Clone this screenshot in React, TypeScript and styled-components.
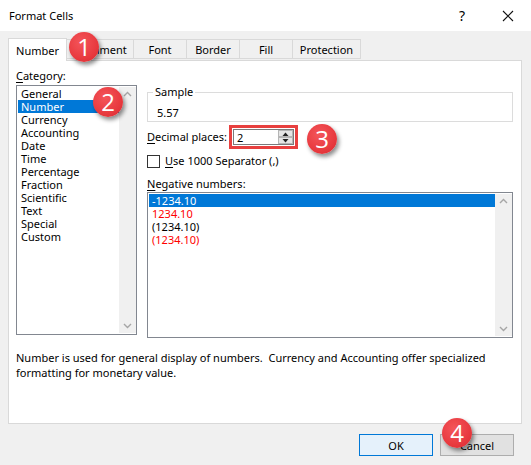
import React from "react";
import styled, { createGlobalStyle } from "styled-components";

const Global = createGlobalStyle`
  html, body { margin: 0; padding: 0; background: #f0f0f0; }
  body { font-family: "Noto Sans", "Segoe UI", sans-serif; font-size: 11px; color: #000; }
  * { box-sizing: border-box; }
`;

const Window = styled.div`
  position: relative;
  width: 531px;
  height: 465px;
  background: #f0f0f0;
  display: flex;
  flex-direction: column;
  overflow: hidden;
`;

const TitleBar = styled.div`
  height: 31px;
  background: #fff;
  display: flex;
  align-items: center;
  padding-left: 9px;
  flex-shrink: 0;
`;

const Title = styled.div`
  flex: 1;
  font-size: 11px;
  line-height: 14px;
  margin-top: 1px;
`;

const TitleButton = styled.div<{ $w: number }>`
  width: ${(p) => p.$w}px;
  height: 31px;
  display: flex;
  align-items: center;
  justify-content: center;
  font-size: 14px;
`;

const Body = styled.div`
  padding: 7px 9px 0 8px;
  display: flex;
  flex-direction: column;
`;

const TabStrip = styled.div`
  display: flex;
  align-items: flex-end;
  height: 23px;
  position: relative;
  z-index: 1;
`;

const Tab = styled.div<{ $active?: boolean; $w: number }>`
  width: ${(p) => p.$w}px;
  height: ${(p) => (p.$active ? 23 : 20)}px;
  margin-bottom: ${(p) => (p.$active ? 0 : 2)}px;
  border: 1px solid #d9d9d9;
  border-bottom: ${(p) => (p.$active ? "none" : "1px solid #d9d9d9")};
  margin-left: ${(p) => (p.$active ? 0 : -1)}px;
  background: ${(p) => (p.$active ? "#fff" : "#f0f0f0")};
  display: flex;
  align-items: center;
  justify-content: center;
  font-size: 11px;
  line-height: 14px;
  padding-top: ${(p) => (p.$active ? 1 : 2)}px;
`;

const Panel = styled.div`
  margin-top: -1px;
  height: 364px;
  border: 1px solid #d9d9d9;
  background: #fff;
  display: flex;
  flex-direction: column;
  padding: 0 0 0 7px;
`;

const Columns = styled.div`
  display: flex;
  gap: 10px;
`;

const LeftCol = styled.div`
  width: 121px;
  padding-top: 8px;
  display: flex;
  flex-direction: column;
`;

const RightCol = styled.div`
  width: 366px;
  padding-top: 24px;
  display: flex;
  flex-direction: column;
`;

const Label = styled.div<{ $mb?: number }>`
  font-size: 11px;
  line-height: 14px;
  margin-bottom: ${(p) => p.$mb ?? 0}px;
  white-space: nowrap;
`;

const FieldLabel = styled(Label)`
  width: 78px;
`;

const U = styled.span`
  text-decoration: underline;
  text-underline-offset: 2px;
`;

const ListBox = styled.div<{ $h: number }>`
  height: ${(p) => p.$h}px;
  border: 1px solid #828790;
  background: #fff;
  display: flex;
  padding: 1px 0 1px 1px;
`;

const ListItems = styled.div`
  flex: 1;
  display: flex;
  flex-direction: column;
`;

const Item = styled.div<{ $sel?: boolean; $red?: boolean }>`
  height: 13px;
  line-height: 13px;
  font-size: 11px;
  padding-left: 3px;
  white-space: nowrap;
  background: ${(p) => (p.$sel ? "#0078d7" : "transparent")};
  color: ${(p) => (p.$sel ? "#fff" : p.$red ? "#ff0000" : "#000")};
`;

const ScrollBar = styled.div`
  width: 17px;
  background: #f0f0f0;
  display: flex;
  flex-direction: column;
  justify-content: space-between;
  align-items: center;
  padding: 4px 0 4px;
`;

const Fieldset = styled.fieldset`
  margin: 0;
  padding: 0 8px 5px;
  height: 37px;
  border: 1px solid #dcdcdc;
  min-width: 0;
`;

const Legend = styled.legend`
  padding: 0 2px;
  margin-left: -3px;
  font-size: 11px;
  line-height: 14px;
`;

const SampleValue = styled.div`
  font-size: 11px;
  line-height: 14px;
  margin-top: 7px;
  padding-left: 1px;
`;

const Row = styled.div`
  display: flex;
  align-items: center;
`;

const DecimalRow = styled(Row)`
  margin-top: 3px;
  gap: 4px;
`;

const Highlight = styled.div`
  border: 3px solid #e8403f;
  padding: 1px;
  width: 69px;
  height: 24px;
`;

const SpinInput = styled.div`
  height: 16px;
  border: 1px solid #7a7a7a;
  background: #fff;
  display: flex;
  align-items: center;
  justify-content: space-between;
  padding-left: 3px;
`;

const SpinButtons = styled.div`
  width: 15px;
  height: 14px;
  display: flex;
  flex-direction: column;
`;

const SpinBtn = styled.div`
  flex: 1;
  background: #e5e5e5;
  border: 1px solid #b5b5b5;
  display: flex;
  align-items: center;
  justify-content: center;
`;

const CheckRow = styled(Row)`
  margin-top: 5px;
  gap: 5px;
`;

const CheckBox = styled.div`
  width: 13px;
  height: 13px;
  border: 1px solid #333;
  background: #fff;
`;

const NegLabel = styled(Label)`
  margin-top: 9px;
  margin-bottom: 1px;
`;

const Description = styled.div`
  margin-top: 13px;
  font-size: 11px;
  line-height: 14.5px;
  white-space: pre;
`;

const Footer = styled.div`
  display: flex;
  justify-content: flex-end;
  gap: 7px;
  padding: 10px 8px 0 0;
`;

const Button = styled.div<{ $primary?: boolean }>`
  width: 74px;
  height: 22px;
  border: 1px solid ${(p) => (p.$primary ? "#0078d7" : "#adadad")};
  background: ${(p) => (p.$primary ? "#e5f1fb" : "#e1e1e1")};
  display: flex;
  align-items: center;
  justify-content: center;
  font-size: 11px;
`;

const Badge = styled.div<{ $x: number; $y: number }>`
  position: absolute;
  left: ${(p) => p.$x - 15}px;
  top: ${(p) => p.$y - 15}px;
  width: 30px;
  height: 30px;
  border-radius: 50%;
  background: radial-gradient(circle at 40% 35%, #f4555a 0%, #e83a3f 60%, #d8292f 100%);
  color: #fff;
  font-family: "Open Sans", "Noto Sans", sans-serif;
  font-size: 24px;
  line-height: 30px;
  text-align: center;
  box-shadow: 2px 3px 4px rgba(0, 0, 0, 0.45);
  z-index: 5;
`;

const Chevron = ({ up }: { up?: boolean }) => (
  <svg width="9" height="6" viewBox="0 0 9 6">
    <path
      d={up ? "M1 5 L4.5 1.5 L8 5" : "M1 1 L4.5 4.5 L8 1"}
      fill="none"
      stroke="#a6a6a6"
      strokeWidth="1.4"
    />
  </svg>
);

const Tri = ({ up }: { up?: boolean }) => (
  <svg width="7" height="4" viewBox="0 0 7 4">
    <path d={up ? "M0.5 4 L3.5 0.5 L6.5 4 Z" : "M0.5 0 L3.5 3.5 L6.5 0 Z"} fill="#222" />
  </svg>
);

const categories = [
  "General",
  "Number",
  "Currency",
  "Accounting",
  "Date",
  "Time",
  "Percentage",
  "Fraction",
  "Scientific",
  "Text",
  "Special",
  "Custom",
];

const negatives: { t: string; red?: boolean }[] = [
  { t: "-1234.10" },
  { t: "1234.10", red: true },
  { t: "(1234.10)" },
  { t: "(1234.10)", red: true },
];

const tabs = [
  { t: "Number", w: 59 },
  { t: "Alignment", w: 68 },
  { t: "Font", w: 54 },
  { t: "Border", w: 54 },
  { t: "Fill", w: 54 },
  { t: "Protection", w: 69 },
];

export default function App() {
  return (
    <>
      <Global />
      <Window>
        <TitleBar>
          <Title>Format Cells</Title>
          <TitleButton $w={46}>?</TitleButton>
          <TitleButton $w={46}>
            <svg width="12" height="12" viewBox="0 0 12 12">
              <path d="M1 1 L11 11 M11 1 L1 11" stroke="#111" strokeWidth="1.1" />
            </svg>
          </TitleButton>
        </TitleBar>
        <Body>
          <TabStrip>
            {tabs.map((t, i) => (
              <Tab key={t.t} $active={i === 0} $w={t.w}>
                {t.t}
              </Tab>
            ))}
          </TabStrip>
          <Panel>
            <Columns>
              <LeftCol>
                <Label $mb={2}>
                  <U>C</U>ategory:
                </Label>
                <ListBox $h={250}>
                  <ListItems>
                    {categories.map((c, i) => (
                      <Item key={c} $sel={i === 1}>
                        {c}
                      </Item>
                    ))}
                  </ListItems>
                  <ScrollBar>
                    <Chevron up />
                    <Chevron />
                  </ScrollBar>
                </ListBox>
              </LeftCol>
              <RightCol>
                <Fieldset>
                  <Legend>Sample</Legend>
                  <SampleValue>5.57</SampleValue>
                </Fieldset>
                <DecimalRow>
                  <FieldLabel>
                    <U>D</U>ecimal places:
                  </FieldLabel>
                  <Highlight>
                    <SpinInput>
                      <span>2</span>
                      <SpinButtons>
                        <SpinBtn>
                          <Tri up />
                        </SpinBtn>
                        <SpinBtn>
                          <Tri />
                        </SpinBtn>
                      </SpinButtons>
                    </SpinInput>
                  </Highlight>
                </DecimalRow>
                <CheckRow>
                  <CheckBox />
                  <Label>
                    <U>U</U>se 1000 Separator (,)
                  </Label>
                </CheckRow>
                <NegLabel>
                  <U>N</U>egative numbers:
                </NegLabel>
                <ListBox $h={146}>
                  <ListItems>
                    {negatives.map((n, i) => (
                      <Item key={i} $sel={i === 0} $red={n.red}>
                        {n.t}
                      </Item>
                    ))}
                  </ListItems>
                  <ScrollBar>
                    <Chevron up />
                    <Chevron />
                  </ScrollBar>
                </ListBox>
              </RightCol>
            </Columns>
            <Description>
              {"Number is used for general display of numbers.  Currency and Accounting offer specialized\nformatting for monetary value."}
            </Description>
          </Panel>
          <Footer>
            <Button $primary>OK</Button>
            <Button>Cancel</Button>
          </Footer>
        </Body>
        <Badge $x={84} $y={47}>1</Badge>
        <Badge $x={108} $y={102}>2</Badge>
        <Badge $x={322} $y={139}>3</Badge>
        <Badge $x={457} $y={433}>4</Badge>
      </Window>
    </>
  );
}
